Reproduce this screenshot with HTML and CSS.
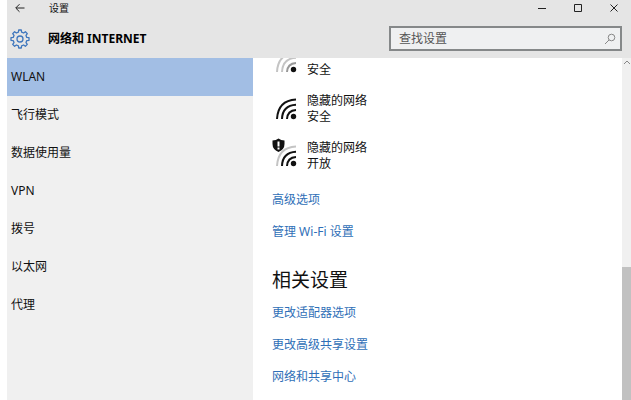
FILE: index.html
```html
<!DOCTYPE html>
<html lang="zh-CN">
<head>
<meta charset="utf-8">
<title>设置</title>
<link rel="stylesheet" href="styles.css">
</head>
<body>
<div class="window">
  <header class="top">
    <div class="titlebar">
      <button class="icon-button" type="button" aria-label="返回">
        <svg width="12" height="12" viewBox="0 0 12 12"><path d="M10.500 6H2M5.500 2.200L1.700 6l3.800 3.800"/></svg>
      </button>
      <span class="app-name">设置</span>
      <div class="controls">
        <button class="icon-button" type="button" aria-label="最小化">
          <svg width="10" height="10" viewBox="0 0 10 10"><path d="M1 5.500h8"/></svg>
        </button>
        <button class="icon-button" type="button" aria-label="最大化">
          <svg width="10" height="10" viewBox="0 0 10 10"><path d="M1.500 1.500h7v7h-7z"/></svg>
        </button>
        <button class="icon-button" type="button" aria-label="关闭">
          <svg width="10" height="10" viewBox="0 0 10 10"><path d="M1.500 1.500l7 7M8.500 1.500l-7 7"/></svg>
        </button>
      </div>
    </div>
    <div class="heading-row">
      <svg class="gear" width="20" height="20" viewBox="0 0 20 20">
        <path d="M8.4 3.2L8.7 1h2.6l.3 2.2 2 .8 1.8-1.3 1.9 1.9L16 6.4l.8 2 2.200.3v2.600l-2.200.3-.8 2 1.300 1.800-1.900 1.900-1.800-1.300-2 .8-.3 2.200H8.700l-.3-2.200-2-.8-1.800 1.300-1.900-1.900L4 13.600l-.8-2L1 11.300V8.700l2.200-.3.8-2-1.300-1.800 1.900-1.900L6.400 4z"/>
        <circle cx="10" cy="10" r="3"/>
      </svg>
      <h1>网络和 INTERNET</h1>
      <div class="search">
        <input type="text" placeholder="查找设置" aria-label="查找设置">
        <svg width="12" height="12" viewBox="0 0 12 12"><circle cx="7.500" cy="4.500" r="3.300"/><path d="M5.100 6.900L1 11"/></svg>
      </div>
    </div>
  </header>
  <div class="body">
    <nav class="sidebar">
      <a class="current" href="#wlan" aria-current="page">WLAN</a>
      <a href="#airplane">飞行模式</a>
      <a href="#data">数据使用量</a>
      <a href="#vpn">VPN</a>
      <a href="#dialup">拨号</a>
      <a href="#ethernet">以太网</a>
      <a href="#proxy">代理</a>
    </nav>
    <main class="content">
      <ul class="networks">
        <li>
          <svg class="wifi" width="28" height="32" viewBox="0 0 28 32">
            <path class="weak" d="M5 26Q6 7.500 24 6.500"/>
            <path class="weak" d="M10 26Q10.500 12.500 24 11.800"/>
            <path class="medium" d="M15 26Q15.500 17.500 24 17"/>
            <circle cx="21.500" cy="23.500" r="2.700"/>
          </svg>
          <div><span>安全</span></div>
        </li>
        <li>
          <svg class="wifi" width="28" height="32" viewBox="0 0 28 32">
            <path d="M5 26Q6 7.500 24 6.500"/>
            <path d="M10 26Q10.500 12.500 24 11.800"/>
            <path d="M15 26Q15.500 17.500 24 17"/>
            <circle cx="21.500" cy="23.500" r="2.700"/>
          </svg>
          <div><span>隐藏的网络</span><span>安全</span></div>
        </li>
        <li>
          <svg class="wifi" width="28" height="32" viewBox="0 0 28 32">
            <path class="weak" d="M5 26Q6 7.500 24 6.500"/>
            <path d="M10 26Q10.500 12.500 24 11.800"/>
            <path d="M15 26Q15.500 17.500 24 17"/>
            <circle cx="21.500" cy="23.500" r="2.700"/>
            <path class="shield" d="M6.500 -1.500Q9 .5 12.500 .5V4Q12.500 9.500 6.500 12Q.5 9.500 .5 4V.5Q4 .5 6.500 -1.500z"/>
            <path class="mark" d="M6.500 1.500v5M6.500 7.500v2"/>
          </svg>
          <div><span>隐藏的网络</span><span>开放</span></div>
        </li>
      </ul>
      <div class="links">
        <a href="#advanced">高级选项</a>
        <a href="#manage">管理 Wi-Fi 设置</a>
      </div>
      <h2>相关设置</h2>
      <div class="links">
        <a href="#adapter">更改适配器选项</a>
        <a href="#sharing">更改高级共享设置</a>
        <a href="#center">网络和共享中心</a>
      </div>
    </main>
    <div class="scrollbar">
      <svg width="9" height="9" viewBox="0 0 9 9"><path d="M2 6l3-3 3 3"/></svg>
      <div class="thumb"></div>
    </div>
  </div>
</div>
</body>
</html>
```

FILE: styles.css
```css
* {
  box-sizing: border-box;
}

body {
  margin: 0;
  background: #fff;
  color: #111;
  font: 12px/16px "Noto Sans", "Noto Sans CJK SC", sans-serif;
}

a {
  text-decoration: none;
}

svg {
  display: block;
  flex: none;
  fill: none;
  stroke: #222;
}

.window {
  display: flex;
  flex-direction: column;
  height: 100vh;
  padding-left: 7px;
  overflow: hidden;
}

.top {
  flex: none;
  background: #e5e5e5;
}

.titlebar {
  display: flex;
  align-items: center;
  height: 15px;
  padding: 0 12px 0 7px;
}

.app-name {
  margin-left: 23px;
  font-size: 10px;
}

.icon-button {
  padding: 0;
  border: 0;
  background: none;
}

.controls {
  display: flex;
  gap: 26px;
  margin-left: auto;
}

.heading-row {
  display: flex;
  align-items: center;
  height: 43px;
  padding: 4px 9px 0 3px;
}

.gear {
  stroke: #3e76bd;
  stroke-width: 1.3;
  stroke-linejoin: round;
}

h1 {
  margin: 0 0 0 18px;
  color: #000;
  font-size: 12px;
  font-weight: 700;
}

.search {
  display: flex;
  align-items: center;
  width: 233px;
  height: 25px;
  margin-left: auto;
  padding: 0 4px 0 8px;
  border: 2px solid #858889;
  background: #eff0f1;
}

.search input {
  flex: 1;
  min-width: 0;
  padding: 0;
  border: 0;
  outline: 0;
  background: none;
  font: inherit;
}

.search input::placeholder {
  color: #555;
}

.search svg {
  stroke: #888;
}

.body {
  display: flex;
  flex: 1;
  min-height: 0;
}

.sidebar {
  flex: none;
  width: 246px;
  background: #f0f0f0;
}

.sidebar a {
  display: block;
  padding: 0 4px;
  color: #111;
  line-height: 38px;
}

.sidebar .current {
  background: #a2bee4;
}

.content {
  flex: 1;
  padding-left: 19px;
  overflow: hidden;
}

.networks {
  display: grid;
  gap: 15px;
  margin: -12px 0 12px;
  padding: 0;
  list-style: none;
}

.networks li {
  display: flex;
  align-items: flex-end;
  gap: 7px;
}

.networks span {
  display: block;
}

.wifi {
  overflow: visible;
  stroke: #111;
  stroke-width: 2;
}

.wifi circle,
.wifi .shield {
  fill: #111;
  stroke: none;
}

.wifi .weak {
  stroke: #c4c4c4;
}

.wifi .medium {
  stroke: #999;
}

.wifi .mark {
  stroke: #fff;
}

.links {
  display: flex;
  flex-direction: column;
  align-items: flex-start;
}

.links a {
  color: #2f6fb7;
  line-height: 32px;
}

h2 {
  margin: 19px 0 4px;
  color: #111;
  font-size: 19px;
  font-weight: 400;
  line-height: 26px;
}

.scrollbar {
  display: flex;
  flex: none;
  flex-direction: column;
  justify-content: space-between;
  width: 9px;
  background: #f0f0f0;
}

.scrollbar svg {
  stroke: #888;
}

.thumb {
  height: 39%;
  background: #c1c1c1;
}
```
